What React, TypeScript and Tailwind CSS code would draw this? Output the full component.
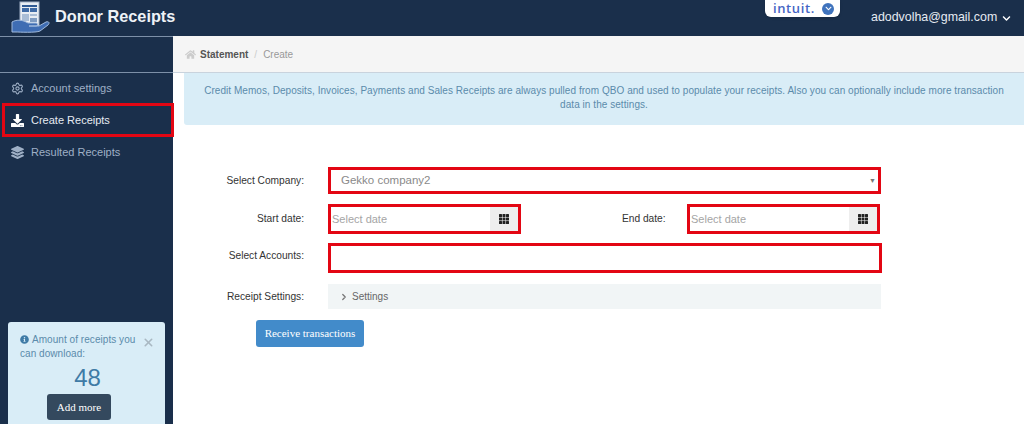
import React from 'react'
import { ChevronRight, Settings, X } from 'lucide-react'
import { FaChevronDown, FaDownload, FaHome, FaInfoCircle, FaLayerGroup } from 'react-icons/fa'

const Logo = () => (
  <svg width="40" height="32" viewBox="0 0 40 32">
    <rect x="9" y="1" width="19" height="24" fill="#e8edf3" stroke="#9fb0c6" />
    <rect x="11" y="4" width="15" height="2" fill="#2f5a94" />
    <rect x="11" y="7" width="7" height="4" fill="#3f6ba6" />
    <rect x="19" y="7" width="7" height="4" fill="#3f6ba6" />
    <rect x="11" y="13" width="7" height="7" fill="#a9bdd6" />
    <rect x="19" y="13" width="7" height="2" fill="#a9bdd6" />
    <rect x="19" y="17" width="7" height="4" fill="#7f9cc2" />
    <path d="M1 21 C6 18 12 19 17 22 L25 22 C27 22 27 25 25 25 L18 25 L28 25 L35 21 C38 20 39 22 37 24 L29 30 C25 32 8 31 5 31 L1 31 Z" fill="#3f6db3" stroke="#9fb9dc" strokeWidth="1" />
  </svg>
)

const GridIcon = () => (
  <svg width="10" height="10" viewBox="0 0 10 10" fill="#222222">
    {[0, 3.5, 7].map((y) =>
      [0, 3.5, 7].map((x) => <rect key={`${x}-${y}`} x={x} y={y} width="3" height="3" rx="0.5" />),
    )}
  </svg>
)

const IntuitBadge = () => (
  <div className="flex h-[17px] w-[75px] items-center justify-between rounded-b-md bg-white pl-2 pr-[6px] shadow">
    <span className="font-['Open_Sans',sans-serif] text-[13px] font-semibold leading-none tracking-[0.6px] text-[#4465c4]">intuit.</span>
    <span className="flex h-[12px] w-[12px] items-center justify-center rounded-full bg-[#3f73bd]">
      <FaChevronDown size={7} className="text-white" />
    </span>
  </div>
)

const navItems = [
  { label: 'Account settings', icon: Settings },
  { label: 'Create Receipts', icon: FaDownload, active: true },
  { label: 'Resulted Receipts', icon: FaLayerGroup },
]

const Sidebar = () => (
  <aside className="flex h-[388px] w-[173px] shrink-0 flex-col bg-[#1a2f4b]">
    <div className="h-[37px] shrink-0 border-y border-[#7d90a8]" />
    <nav className="-mt-[1px] flex flex-col">
      {navItems.map((item) => (
        <div
          key={item.label}
          className={
            item.active
              ? 'relative z-10 -my-[1px] ml-[2px] flex h-[34px] w-[172px] items-center gap-[7px] border-[3px] border-[#e30613] pl-[6px] text-[11px] text-[#e6ebf2]'
              : 'flex h-[32px] items-center gap-[7px] pl-[11px] text-[11px] text-[#9fb0c6]'
          }
        >
          <item.icon size={13} className={item.active ? 'text-white' : 'text-[#9fb0c6]'} />
          <span>{item.label}</span>
        </div>
      ))}
    </nav>
    <div className="mx-[8px] mt-auto h-[102px] rounded-t-[3px] bg-[#d9edf7] pl-[12px] pr-[10px] pt-[11px] text-[#5b8bab]">
      <div className="flex items-start">
        <p className="w-[118px] text-[10px] leading-[14px] tracking-[0.05px]">
          <FaInfoCircle size={9} className="mb-[2px] mr-[3px] inline text-[#3f7ba6]" />
          Amount of receipts you can download:
        </p>
        <X size={13} strokeWidth={3} className="ml-[5px] mt-[3px] text-[#a9b8c2]" />
      </div>
      <div className="mt-[4px] text-center text-[24px] leading-[26px] text-[#3f7ba6]">48</div>
      <button className="ml-[27px] mt-[3px] h-[26px] w-[64px] rounded-[3px] bg-[#34495e] font-['Liberation_Serif',serif] text-[11px] text-white">
        Add more
      </button>
    </div>
  </aside>
)

const DateField = () => (
  <div className="flex h-[30px] w-[193px] border-[3px] border-[#e30613] bg-white">
    <span className="flex flex-1 items-center pl-[1px] pt-[1px] text-[11px] text-[#a5a5a5]">Select date</span>
    <span className="flex w-[28px] items-center justify-center bg-[#eeeeee]">
      <GridIcon />
    </span>
  </div>
)

const Label = ({ children }: { children: React.ReactNode }) => (
  <div className="w-[131px] shrink-0 text-right text-[10.2px] text-[#333333]">{children}</div>
)

const App = () => {
  return (
    <div className="h-[424px] w-[1024px] overflow-hidden bg-white font-['Liberation_Sans',Arial,sans-serif]">
      <header className="relative flex h-[36px] items-start bg-[#1a2f4b]">
        <div className="ml-[11px] mt-[1px]">
          <Logo />
        </div>
        <span className="ml-[4px] mt-[5px] text-[16.3px] font-bold leading-[22px] text-[#eef2f7]">Donor Receipts</span>
        <div className="ml-auto mr-[184px]">
          <IntuitBadge />
        </div>
        <div className="absolute left-[871px] top-[8px] flex items-center gap-[5px] text-[12.4px] leading-[18px] text-[#e6ebf2]">
          adodvolha@gmail.com
          <FaChevronDown size={9} className="mt-[2px] text-white" />
        </div>
      </header>
      <div className="flex">
        <Sidebar />
        <main className="flex-1">
          <div className="flex h-[37px] items-center gap-[4px] border-b border-[#c9d3dd] bg-[#f5f5f5] pl-[12px] text-[10px]">
            <FaHome size={11} className="text-[#cccccc]" />
            <span className="font-bold text-[#555555]">Statement</span>
            <span className="mx-[2px] text-[#cccccc]">/</span>
            <span className="text-[#999999]">Create</span>
          </div>
          <div className="ml-[11px] h-[52px] rounded-bl-[3px] bg-[#d9edf7] px-[20px] pt-[11px] text-center text-[10px] leading-[14px] tracking-[0.05px] text-[#5b8bab]">
            Credit Memos, Deposits, Invoices, Payments and Sales Receipts are always pulled from QBO and used to populate your receipts. Also you can optionally include more transaction data in the settings.
          </div>
          <form className="flex flex-col pt-[42px]">
            <div className="flex h-[27px] items-center gap-[24px]">
              <Label>Select Company:</Label>
              <div className="flex h-[27px] w-[553px] items-center justify-between border-[3px] border-[#e30613] pl-[10px] pr-[2px] pt-[1px] text-[11.5px] text-[#8a8a8a]">
                Gekko company2
                <span className="text-[7px] text-[#777777]">▼</span>
              </div>
            </div>
            <div className="mt-[10px] flex items-center gap-[24px]">
              <Label>Start date:</Label>
              <DateField />
              <div className="ml-[77px] w-[41px] whitespace-nowrap text-[10.2px] text-[#333333]">End date:</div>
              <DateField />
            </div>
            <div className="mt-[9px] flex items-center gap-[24px]">
              <div className="pb-[4px]">
                <Label>Select Accounts:</Label>
              </div>
              <div className="h-[30px] w-[554px] border-[3px] border-[#e30613]" />
            </div>
            <div className="mt-[11px] flex items-center gap-[24px]">
              <Label>Receipt Settings:</Label>
              <div className="flex h-[25px] w-[553px] items-center gap-[3px] bg-[#f1f5f6] pl-[11px] text-[10px] text-[#666666]">
                <ChevronRight size={10} strokeWidth={3} className="text-[#777777]" />
                Settings
              </div>
            </div>
            <button
              type="button"
              className="ml-[83px] mt-[11px] h-[27px] w-[108px] rounded-[3px] bg-[#428bca] font-['Liberation_Serif',serif] text-[11px] text-white"
            >
              Receive transactions
            </button>
          </form>
        </main>
      </div>
    </div>
  )
}

export default App
